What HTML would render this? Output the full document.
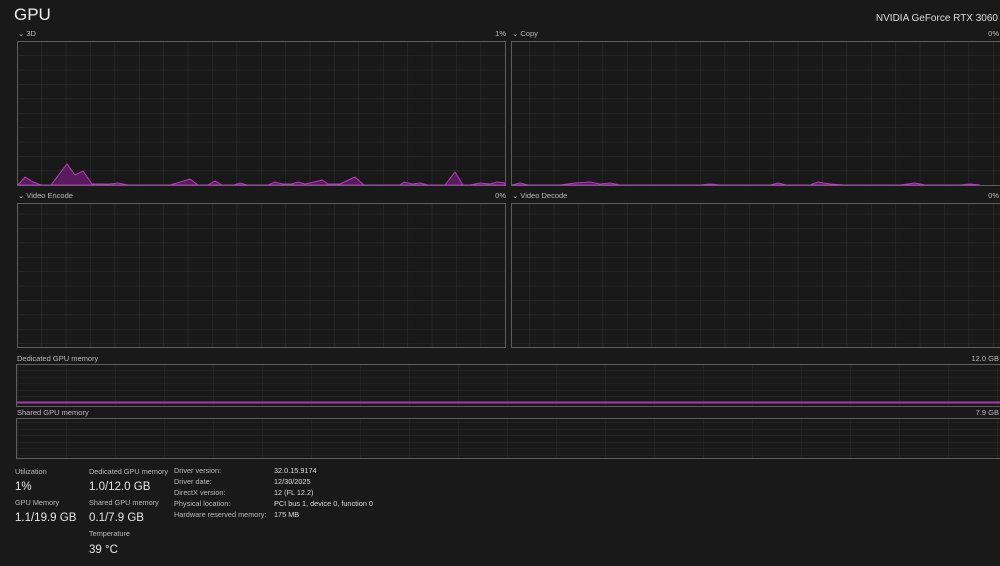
<!DOCTYPE html>
<html><head><meta charset="utf-8"><style>
body{margin:0;background:#191919;width:1000px;height:566px;overflow:hidden;font-family:"Liberation Sans",sans-serif;color:#ddd}
svg{position:absolute;left:0;top:0}
</style></head><body>
<svg width="1000" height="566" xmlns="http://www.w3.org/2000/svg" font-family="Liberation Sans, sans-serif">
<defs>
<pattern id="g" x="17" y="41" width="24.4" height="14.4" patternUnits="userSpaceOnUse">
<path d="M0 0V14.4M0 0H24.4" stroke="#2f2f2f" stroke-width="1" fill="none"/>
</pattern>
<pattern id="g2" x="17" y="364" width="49" height="6.5" patternUnits="userSpaceOnUse">
<path d="M0 0V7M0 0H49" stroke="#2c2c2c" stroke-width="1" fill="none"/>
</pattern>
</defs>
<rect width="1000" height="566" fill="#191919"/>
<text x="14" y="20" font-size="17" fill="#eee">GPU</text>
<text x="998" y="21" font-size="10" fill="#ddd" text-anchor="end">NVIDIA GeForce RTX 3060</text>

<g font-size="7.5" fill="#bbb">
<text x="18" y="36">⌄ 3D</text><text x="506" y="36" text-anchor="end">1%</text>
<text x="512" y="36">⌄ Copy</text><text x="999" y="36" text-anchor="end">0%</text>
<text x="18" y="198">⌄ Video Encode</text><text x="506" y="198" text-anchor="end">0%</text>
<text x="512" y="198">⌄ Video Decode</text><text x="999" y="198" text-anchor="end">0%</text>
<text x="17" y="361">Dedicated GPU memory</text><text x="999" y="361" text-anchor="end">12.0 GB</text>
<text x="17" y="415">Shared GPU memory</text><text x="999" y="415" text-anchor="end">7.9 GB</text>
</g>

<g stroke="#5e5e5e" stroke-width="1">
<rect x="17.5" y="41.5" width="488" height="144" fill="url(#g)"/>
<rect x="511.5" y="41.5" width="490" height="144" fill="url(#g)"/>
<rect x="17.5" y="203.5" width="488" height="144" fill="url(#g)"/>
<rect x="511.5" y="203.5" width="490" height="144" fill="url(#g)"/>
<rect x="16.5" y="364.5" width="985" height="42" fill="url(#g2)"/>
<rect x="16.5" y="418.5" width="985" height="40" fill="url(#g2)"/>
</g>

<polygon fill="#5a1a5e" stroke="#b040b8" stroke-width="1" points="18,185 25,177 33,182 41,185 51,185 67,164 75,175 83,171 92,184 110,184 118,183 128,185 170,185 190,179 198,185 208,185 215,181 222,185 234,185 240,183 247,185 268,185 275,182 283,184 292,184 298,182 305,184 314,182 322,180 328,184 340,184 355,177 364,185 400,185 404,182 412,184 420,183 428,185 445,185 455,172 463,185 470,185 480,183 490,184 497,182 505,183 505,185"/>
<polygon fill="#5a1a5e" stroke="#b040b8" stroke-width="1" points="512,185 520,183 528,185 560,185 575,183 590,182 600,184 610,183 620,185 700,185 710,184 720,185 770,185 778,183 786,185 810,185 818,182 830,184 845,185 900,185 915,183 925,185 960,185 970,184 980,185"/>
<line x1="17" y1="402.5" x2="1001" y2="402.5" stroke="#a43cab" stroke-width="2"/>

<g font-size="7.3" fill="#bbb">
<text x="15" y="474">Utilization</text>
<text x="15" y="505">GPU Memory</text>
<text x="89" y="474">Dedicated GPU memory</text>
<text x="89" y="505">Shared GPU memory</text>
<text x="89" y="536">Temperature</text>
<text x="174" y="473">Driver version:</text>
<text x="174" y="484">Driver date:</text>
<text x="174" y="495">DirectX version:</text>
<text x="174" y="506">Physical location:</text>
<text x="174" y="517">Hardware reserved memory:</text>
<g fill="#ddd">
<text x="274" y="473">32.0.15.9174</text>
<text x="274" y="484">12/30/2025</text>
<text x="274" y="495">12 (FL 12.2)</text>
<text x="274" y="506">PCI bus 1, device 0, function 0</text>
<text x="274" y="517">175 MB</text>
</g>
</g>
<g font-size="11.5" fill="#e6e6e6">
<text x="15" y="490">1%</text>
<text x="15" y="521">1.1/19.9 GB</text>
<text x="89" y="490">1.0/12.0 GB</text>
<text x="89" y="521">0.1/7.9 GB</text>
<text x="89" y="553">39 °C</text>
</g>
</svg>
</body></html>
